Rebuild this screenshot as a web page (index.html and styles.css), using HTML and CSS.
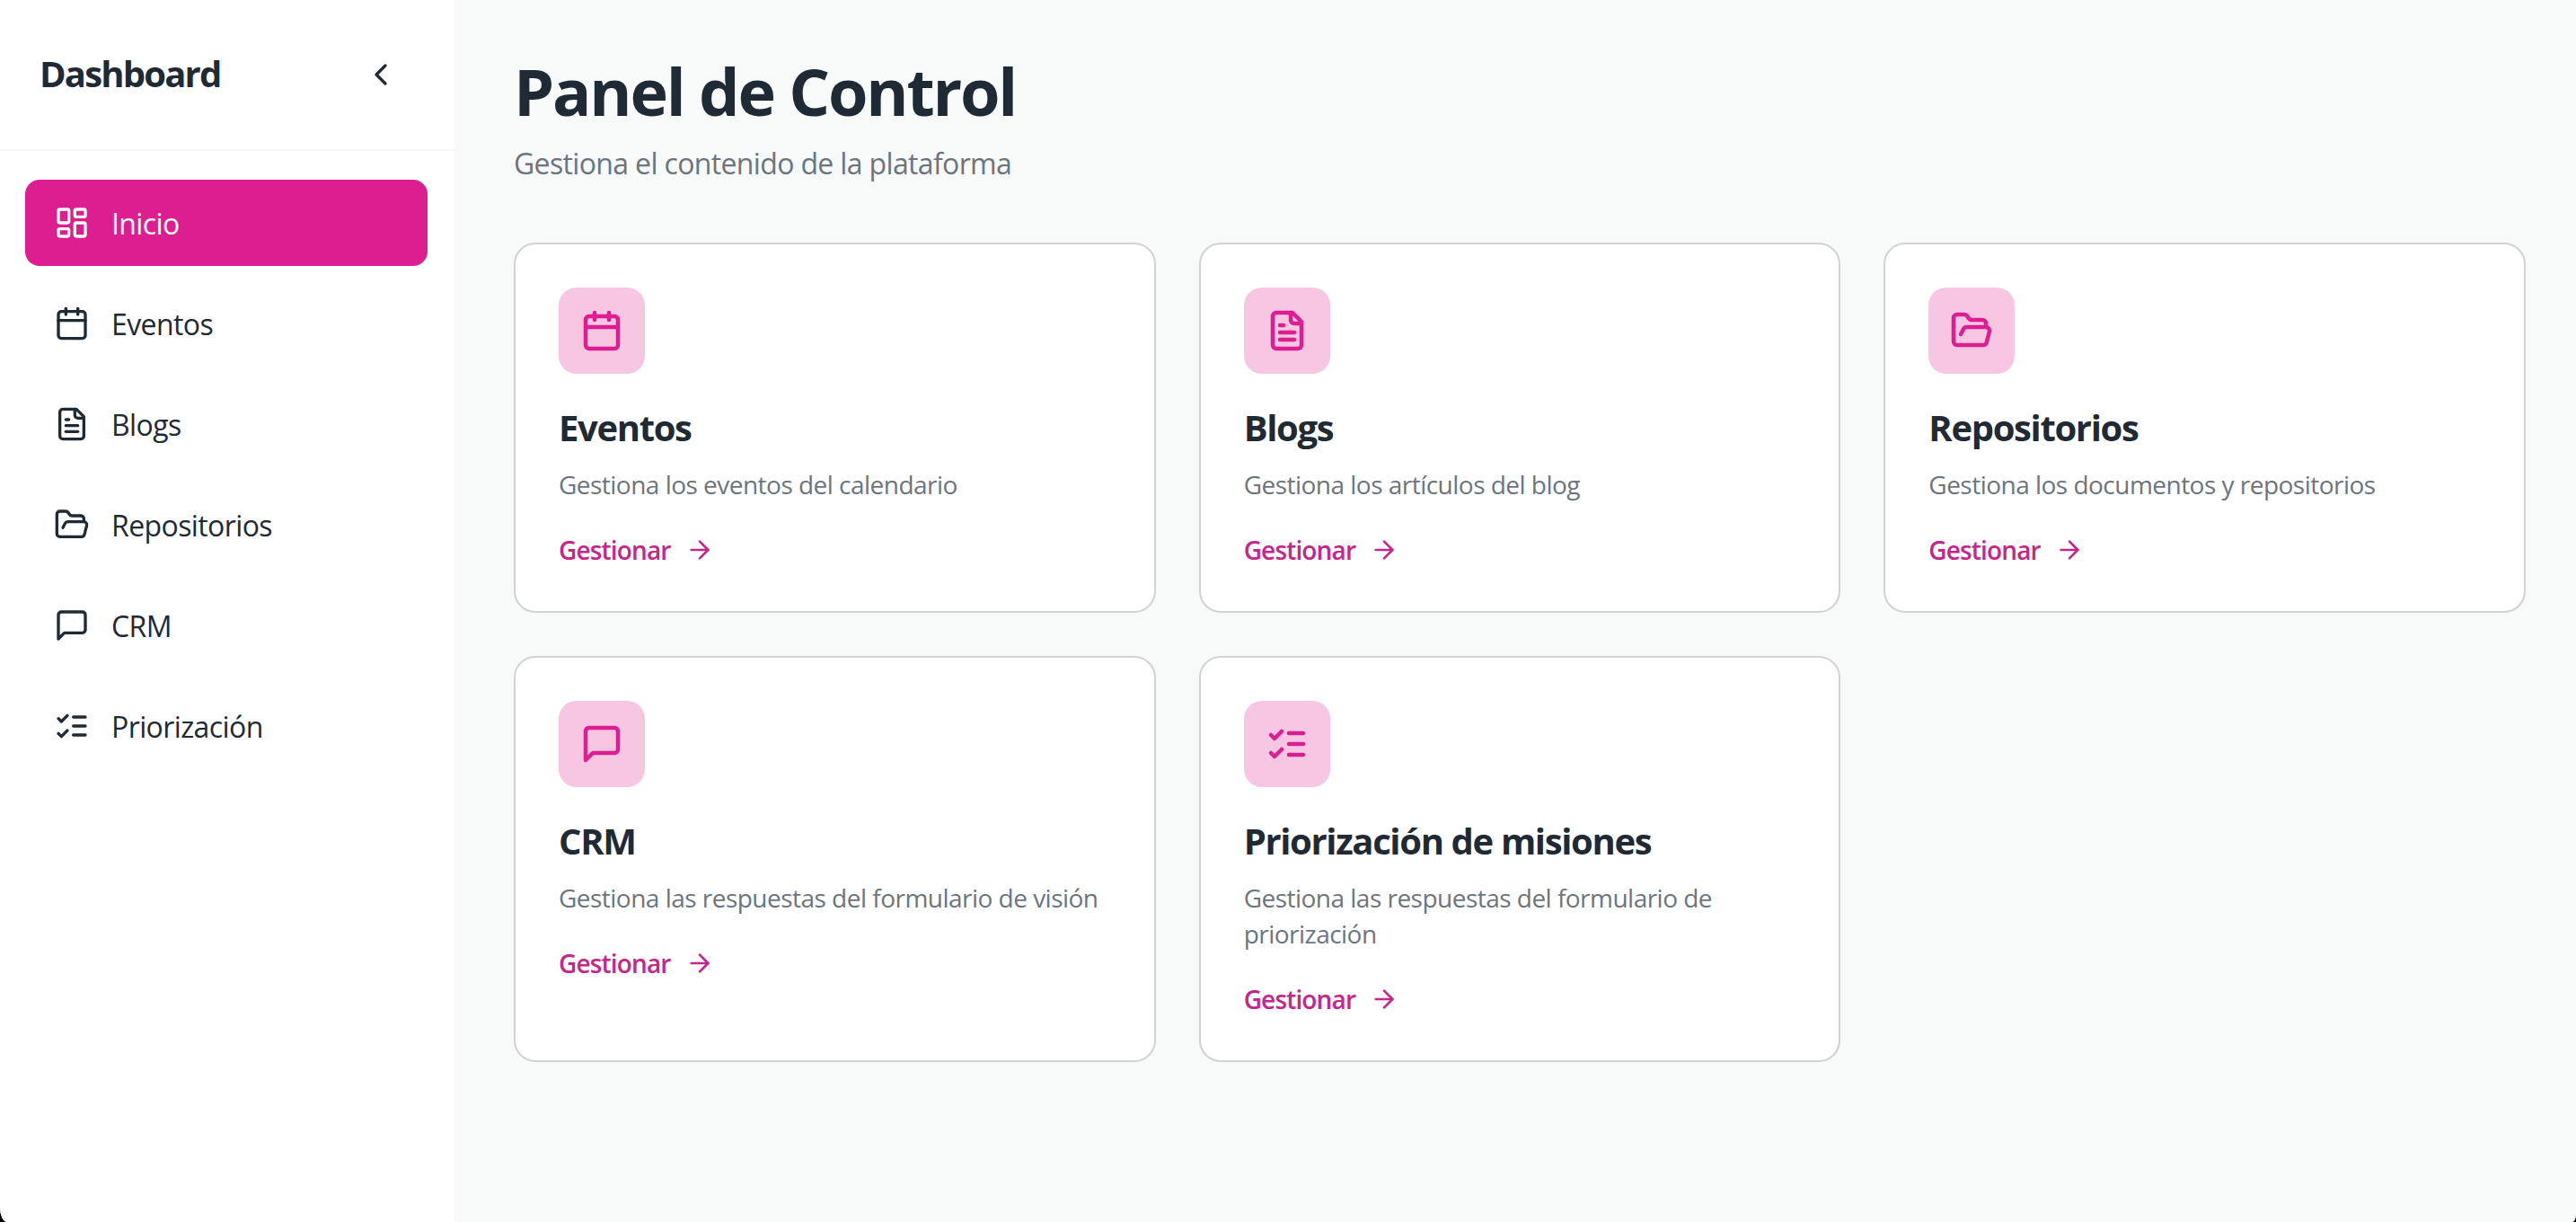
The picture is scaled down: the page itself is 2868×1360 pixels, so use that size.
FILE: index.html
```html
<!DOCTYPE html>
<html lang="es">
<head>
    <meta charset="UTF-8">
    <meta name="viewport" content="width=device-width, initial-scale=1.0">
    <title>Panel de Control</title>
    <link rel="stylesheet" href="styles.css">
</head>
<body>
    <svg class="sprite" xmlns="http://www.w3.org/2000/svg">
        <symbol id="i-home" viewBox="0 0 24 24"><rect x="3" y="3" width="7" height="9" rx="1"/><rect x="14" y="3" width="7" height="5" rx="1"/><rect x="14" y="12" width="7" height="9" rx="1"/><rect x="3" y="16" width="7" height="5" rx="1"/></symbol>
        <symbol id="i-calendar" viewBox="0 0 24 24"><path d="M8 2v4"/><path d="M16 2v4"/><rect x="3" y="4" width="18" height="18" rx="2"/><path d="M3 10h18"/></symbol>
        <symbol id="i-file" viewBox="0 0 24 24"><path d="M15 2H6a2 2 0 0 0-2 2v16a2 2 0 0 0 2 2h12a2 2 0 0 0 2-2V7Z"/><path d="M14 2v4a2 2 0 0 0 2 2h4"/><path d="M10 9H8"/><path d="M16 13H8"/><path d="M16 17H8"/></symbol>
        <symbol id="i-folder" viewBox="0 0 24 24"><path d="m6 14 1.5-2.9A2 2 0 0 1 9.24 10H20a2 2 0 0 1 1.94 2.5l-1.54 6a2 2 0 0 1-1.95 1.5H4a2 2 0 0 1-2-2V5a2 2 0 0 1 2-2h3.9a2 2 0 0 1 1.69.9l.81 1.2a2 2 0 0 0 1.67.9H18a2 2 0 0 1 2 2v2"/></symbol>
        <symbol id="i-message" viewBox="0 0 24 24"><path d="M21 15a2 2 0 0 1-2 2H7l-4 4V5a2 2 0 0 1 2-2h14a2 2 0 0 1 2 2z"/></symbol>
        <symbol id="i-list" viewBox="0 0 24 24"><path d="m3 17 2 2 4-4"/><path d="m3 7 2 2 4-4"/><path d="M13 6h8"/><path d="M13 12h8"/><path d="M13 18h8"/></symbol>
        <symbol id="i-arrow" viewBox="0 0 24 24"><path d="M5 12h14"/><path d="m12 5 7 7-7 7"/></symbol>
        <symbol id="i-chevron" viewBox="0 0 24 24"><path d="m15 18-6-6 6-6"/></symbol>
    </svg>

    <div class="app">
        <aside class="sidebar">
            <div class="sidebar-header">
                <span class="brand">Dashboard</span>
                <button class="collapse-btn"><svg class="icon"><use href="#i-chevron"/></svg></button>
            </div>
            <nav class="nav">
                <a class="nav-item active"><svg class="icon"><use href="#i-home"/></svg><span>Inicio</span></a>
                <a class="nav-item"><svg class="icon"><use href="#i-calendar"/></svg><span>Eventos</span></a>
                <a class="nav-item"><svg class="icon"><use href="#i-file"/></svg><span>Blogs</span></a>
                <a class="nav-item"><svg class="icon"><use href="#i-folder"/></svg><span>Repositorios</span></a>
                <a class="nav-item"><svg class="icon"><use href="#i-message"/></svg><span>CRM</span></a>
                <a class="nav-item"><svg class="icon"><use href="#i-list"/></svg><span>Priorización</span></a>
            </nav>
        </aside>

        <main class="content">
            <h1>Panel de Control</h1>
            <p class="subtitle">Gestiona el contenido de la plataforma</p>

            <div class="cards">
                <div class="card">
                    <div class="card-icon"><svg class="icon"><use href="#i-calendar"/></svg></div>
                    <h3>Eventos</h3>
                    <p>Gestiona los eventos del calendario</p>
                    <a class="card-link">Gestionar <svg class="icon"><use href="#i-arrow"/></svg></a>
                </div>
                <div class="card">
                    <div class="card-icon"><svg class="icon"><use href="#i-file"/></svg></div>
                    <h3>Blogs</h3>
                    <p>Gestiona los artículos del blog</p>
                    <a class="card-link">Gestionar <svg class="icon"><use href="#i-arrow"/></svg></a>
                </div>
                <div class="card">
                    <div class="card-icon"><svg class="icon"><use href="#i-folder"/></svg></div>
                    <h3>Repositorios</h3>
                    <p>Gestiona los documentos y repositorios</p>
                    <a class="card-link">Gestionar <svg class="icon"><use href="#i-arrow"/></svg></a>
                </div>
                <div class="card">
                    <div class="card-icon"><svg class="icon"><use href="#i-message"/></svg></div>
                    <h3>CRM</h3>
                    <p>Gestiona las respuestas del formulario de visión</p>
                    <a class="card-link">Gestionar <svg class="icon"><use href="#i-arrow"/></svg></a>
                </div>
                <div class="card">
                    <div class="card-icon"><svg class="icon"><use href="#i-list"/></svg></div>
                    <h3>Priorización de misiones</h3>
                    <p>Gestiona las respuestas del formulario de priorización</p>
                    <a class="card-link">Gestionar <svg class="icon"><use href="#i-arrow"/></svg></a>
                </div>
            </div>
        </main>
    </div>
</body>
</html>
```

FILE: styles.css
```css
* { box-sizing: border-box; }

html { background-color: #000; }
body { margin: 0; font-family: "Open Sans", "Noto Sans", Arial, sans-serif; color: #1f2a35; }

.sprite { display: none; }
.icon { fill: none; stroke: currentColor; stroke-width: 2; stroke-linecap: round; stroke-linejoin: round; flex-shrink: 0; }

.app { display: flex; height: 1360px; overflow: hidden; background-color: #f8f9f9; border-radius: 0 0 4px 8px / 0 0 8px 16px; }

/* sidebar */
.sidebar { width: 506px; flex-shrink: 0; background-color: #fff; }
.sidebar-header { height: 168px; display: flex; align-items: center; justify-content: space-between; padding: 0 62px 0 44px; border-bottom: 2px solid #f4f5f6; }
.brand { margin-bottom: 4px; font-size: 40px; font-weight: 700; letter-spacing: -1.8px; }
.collapse-btn { display: flex; padding: 0; border: none; background: none; color: #1f2a35; }
.collapse-btn .icon { width: 40px; height: 40px; }

.nav { display: flex; flex-direction: column; gap: 16px; padding: 32px 30px 32px 28px; }
.nav-item { height: 96px; display: flex; align-items: center; gap: 24px; padding: 0 32px; border-radius: 16px; font-size: 32px; color: #1f2a35; letter-spacing: -0.6px; }
.nav-item .icon { width: 40px; height: 40px; }
.nav-item.active { background-color: #dc1e90; color: #fff; }

/* main */
.content { flex: 1; padding: 58px 56px 0 66px; }
.content h1 { margin: 0; font-size: 72px; line-height: 86px; font-weight: 700; letter-spacing: -2.2px; }
.subtitle { margin: 14px 0 0; font-size: 32px; line-height: 48px; color: #6c757d; letter-spacing: -0.65px; }

.cards { display: grid; grid-template-columns: repeat(3, 1fr); gap: 48px; margin-top: 64px; }
.card { background-color: #fff; border: 2px solid #d0d2d3; border-radius: 24px; padding: 48px; }
.card-icon { width: 96px; height: 96px; display: flex; align-items: center; justify-content: center; border-radius: 20px; background-color: #f6c6e3; color: #dc1e90; }
.card-icon .icon { width: 48px; height: 48px; stroke-width: 2.25; }
.card h3 { margin: 32px 0 15px; font-size: 40px; line-height: 56px; font-weight: 700; letter-spacing: -1.35px; }
.card p { margin: 0 0 33px; font-size: 28px; line-height: 40px; color: #6c757d; letter-spacing: -0.52px; }
.card-link { display: inline-flex; align-items: center; gap: 16px; font-size: 28px; line-height: 40px; font-weight: 600; color: #c4268c; letter-spacing: -0.85px; }
.card-link .icon { width: 32px; height: 32px; }
```
